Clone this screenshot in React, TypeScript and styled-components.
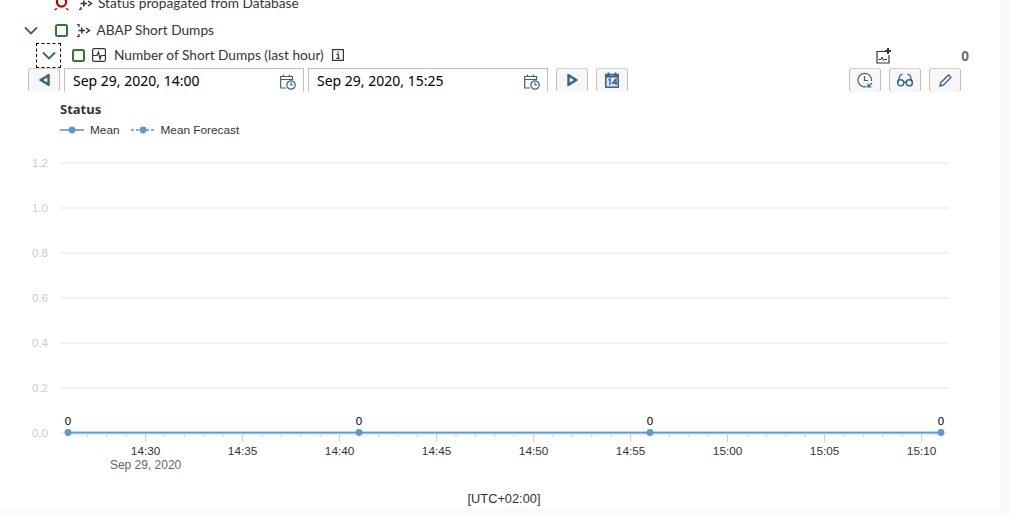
import React from "react";
import styled, { createGlobalStyle } from "styled-components";

const Global = createGlobalStyle`
  html, body { margin: 0; padding: 0; background: #fafafa; height: 516px; overflow: hidden; }
  #root { height: 516px; overflow: hidden; }
`;
const Page = styled.div`
  width: 1000px; height: 509px; background: #fff; overflow: hidden;
  font-family: "Noto Sans", "Liberation Sans", sans-serif; color: #32363a;
`;
const Tree = styled.div`margin-top: -9px; display: flex; flex-direction: column;`;
const Row = styled.div<{ $indent: number; $after: number }>`
  height: 24px; margin-bottom: ${p => p.$after}px; display: flex; align-items: center; padding-left: ${p => p.$indent}px; font-family: "Lato", "Noto Sans", sans-serif; font-size: 13.7px; white-space: nowrap;
`;
const Label = styled.span`margin-top: -2px;`;
const ExpandSlot = styled.div<{ $focus?: boolean }>`
  width: 23px; height: 23px; display: flex; align-items: center; justify-content: center; color: #346187;
  outline: ${p => (p.$focus ? "1px dashed #000" : "none")}; outline-offset: 0;
`;
const IconSlot = styled.span<{ $w: number; $ml?: number }>`
  width: ${p => p.$w}px; margin-left: ${p => p.$ml ?? 0}px; display: inline-flex; align-items: center; justify-content: flex-start; flex: none;
`;
const RowRight = styled.div`margin-left: auto; margin-top: 2px; display: flex; align-items: center; padding-right: 31px;`;
const Value = styled.span`font-family: "Noto Sans", sans-serif; font-weight: 700; color: #6a6d70; font-size: 13.5px; margin-left: 69px;`;
const Toolbar = styled.div`height: 24px; margin-top: 1px; padding-left: 28px; display: flex; align-items: flex-start; padding-right: 39px;`;
const ToolButton = styled.button<{ $ml?: number }>`
  width: 32px; height: 24px; margin: 0 0 0 ${p => p.$ml ?? 0}px; padding: 0; background: #f7f7f7; flex: none;
  border: 1px solid #bfbfbf; border-top-color: #d2d2d2; border-bottom-color: transparent; border-radius: 3px; display: flex; align-items: center; justify-content: center; color: #346187;
`;
const DateField = styled.div<{ $ml: number }>`
  width: 240px; height: 24px; margin-left: ${p => p.$ml}px; box-sizing: border-box; flex: none; border: 1px solid #bfbfbf; border-bottom: none;
  background: #fff; display: flex; align-items: center; justify-content: space-between; padding: 2px 7px 0 8px; font-size: 14px; color: #000; white-space: nowrap;
`;
const DateText = styled.span`margin-top: -2px;`;
const Spacer = styled.div`flex: 1;`;
const ChartTitle = styled.div`margin: 9px 0 0 60px; font-size: 13px; line-height: 17px; font-weight: 700; color: #32363a;`;
const Legend = styled.div`margin: 4px 0 0 60px; height: 16px; display: flex; align-items: center; font-family: "Liberation Sans", sans-serif; font-size: 11.8px; color: #333; gap: 11px;`;
const LegendItem = styled.div`display: flex; align-items: center; gap: 6px;`;
const Plot = styled.svg`display: block; font-family: "Liberation Sans", sans-serif;`;

const Stroke = { fill: "none", stroke: "currentColor", strokeWidth: 1.2 } as const;
const Chevron = () => (
  <svg width="14" height="9" viewBox="0 0 14 9"><path d="M1 1.5 7 7.5 13 1.5" fill="none" stroke="#346187" strokeWidth="1.9" /></svg>
);
const StatusOk = () => (
  <svg width="13" height="13" viewBox="0 0 13 13"><rect x="1" y="1" width="11" height="11" rx="1.5" fill="none" stroke="#2b7d2b" strokeWidth="2" /></svg>
);
const StatusBad = () => (
  <svg width="15" height="15" viewBox="0 0 15 15"><circle cx="7.5" cy="6" r="4.6" fill="none" stroke="#bb0000" strokeWidth="2.2" /><path d="M.5 14 3 12.2M14.5 14 12 12.2" stroke="#bb0000" strokeWidth="1.4" /></svg>
);
const Propagate = () => (
  <svg width="15" height="13" viewBox="0 0 15 13" style={{ color: "#32363a" }}>
    <path d="M1 .7H3V3M3 10V12.3H1" {...Stroke} />
    <path d="M2.5 6.5H9M5.8 3.5V9.5" fill="none" stroke="currentColor" strokeWidth="1.6" />
    <path d="M10 4 13.5 6.5 10 9" fill="none" stroke="currentColor" strokeWidth="1.5" />
  </svg>
);
const Metric = () => (
  <svg width="14" height="14" viewBox="0 0 14 14" style={{ color: "#32363a" }}>
    <rect x="0.6" y="0.6" width="12.8" height="12.8" rx="1.5" {...Stroke} />
    <path d="M1 7.5H5L6.5 4 8 11 9.2 7.5H13" {...Stroke} />
  </svg>
);
const Info = () => (
  <svg width="12" height="12" viewBox="0 0 12 12" style={{ color: "#32363a" }}>
    <rect x="0.6" y="0.6" width="10.8" height="10.8" {...Stroke} />
    <path d="M6 2.5V4M4.5 5.3H6.3V9M4.3 9.3H7.8" {...Stroke} />
  </svg>
);
const AddChart = () => (
  <svg width="16" height="16" viewBox="0 0 16 16" style={{ color: "#32363a" }}>
    <path d="M9 3.5H1V15H13V7" {...Stroke} />
    <path d="M2.5 11.5H5L6 9 7.5 12.5 8.5 11.5H11" fill="none" stroke="currentColor" strokeWidth="1" />
    <path d="M12 0V6M9 3H15" stroke="currentColor" strokeWidth="2" fill="none" />
  </svg>
);
const Back = () => (
  <svg width="11" height="12" viewBox="0 0 11 12"><path d="M9.5 1.2 1.8 6 9.5 10.8Z" fill="none" stroke="#346187" strokeWidth="2.4" /></svg>
);
const Forward = () => (
  <svg width="11" height="12" viewBox="0 0 11 12"><path d="M1.5 1.2 9.2 6 1.5 10.8Z" fill="none" stroke="#346187" strokeWidth="2.4" /></svg>
);
const CalClock = () => (
  <svg width="16" height="16" viewBox="0 0 16 16" style={{ color: "#346187" }}>
    <path d="M6 14H.7V2.5H12.5V6" {...Stroke} />
    <path d="M3.5 .5V3M9.5 .5V3M1 5.5H12" {...Stroke} />
    <circle cx="11" cy="11" r="4.2" {...Stroke} />
    <path d="M11 8.5V11H13" {...Stroke} />
  </svg>
);
const Cal14 = () => (
  <svg width="14" height="16" viewBox="0 0 14 16" style={{ color: "#346187" }}>
    <rect x="0.8" y="2.5" width="12.4" height="12.7" fill="#dfe8f0" stroke="currentColor" strokeWidth="1.5" />
    <path d="M3.5 .5V3.5M10.5 .5V3.5M1 4.5H13" stroke="currentColor" strokeWidth="1.8" fill="none" />
    <path d="M3.5 8 5 7V13M11 13V7L7.5 11H12" fill="none" stroke="currentColor" strokeWidth="1.3" />
  </svg>
);
const ClockBack = () => (
  <svg width="16" height="16" viewBox="0 0 16 16" style={{ color: "#346187" }}>
    <path d="M9.5 14.7A6.8 6.8 0 1 1 14.5 9" {...Stroke} />
    <path d="M7.5 4V8.5H11" {...Stroke} />
    <path d="M15 11 11 15M11 11.5V15H14.5" {...Stroke} />
  </svg>
);
const Glasses = () => (
  <svg width="16" height="14" viewBox="0 0 16 14" style={{ color: "#346187" }}>
    <circle cx="3.7" cy="9.8" r="3.1" fill="none" stroke="currentColor" strokeWidth="1.4" />
    <circle cx="12.3" cy="9.8" r="3.1" fill="none" stroke="currentColor" strokeWidth="1.4" />
    <path d="M6.8 9.5C7.5 8.8 8.5 8.8 9.2 9.5M.8 9 3 2.5 5.5 1M15.2 9 13 2.5 10.5 1" {...Stroke} />
  </svg>
);
const Pencil = () => (
  <svg width="13" height="13" viewBox="0 0 13 13" style={{ color: "#346187" }}>
    <path d="M1 12 1.8 8.7 9.5 1 12 3.5 4.3 11.2Z" fill="none" stroke="currentColor" strokeWidth="1.3" />
    <path d="M1 12 1.6 9.7 3.3 11.4Z" fill="currentColor" />
  </svg>
);
const LegendLine = ({ dash }: { dash?: boolean }) => (
  <svg width="24" height="8" viewBox="0 0 24 8">
    <path d="M0 4H24" stroke="#5899da" strokeWidth="1.6" strokeDasharray={dash ? "3 2" : undefined} />
    <circle cx="12" cy="4" r="3.4" fill="#5899da" />
  </svg>
);

const gridY = [
  { y: 163, t: "1.2" }, { y: 208, t: "1.0" }, { y: 253, t: "0.8" },
  { y: 298, t: "0.6" }, { y: 343, t: "0.4" }, { y: 388, t: "0.2" }, { y: 433, t: "0.0" },
];
const majors = ["14:30", "14:35", "14:40", "14:45", "14:50", "14:55", "15:00", "15:05", "15:10"];
const xOf = (i: number) => 145.6 + i * 97;
const minors = Array.from({ length: 45 }, (_, i) => 87.4 + i * 19.4).filter(x => x < 941);
const points = [68, 359, 650, 941];

export default function App() {
  return (
    <Page>
      <Global />
      <Tree>
        <Row $indent={54} $after={3}>
          <IconSlot $w={24}><StatusBad /></IconSlot>
          <IconSlot $w={20}><Propagate /></IconSlot>
          <Label>Status propagated from Database</Label>
        </Row>
        <Row $indent={19} $after={1}>
          <ExpandSlot><Chevron /></ExpandSlot>
          <IconSlot $w={21} $ml={13}><StatusOk /></IconSlot>
          <IconSlot $w={20.5}><Propagate /></IconSlot>
          <Label>ABAP Short Dumps</Label>
        </Row>
        <Row $indent={37} $after={0}>
          <ExpandSlot $focus><Chevron /></ExpandSlot>
          <IconSlot $w={21} $ml={12}><StatusOk /></IconSlot>
          <IconSlot $w={22} $ml={-1}><Metric /></IconSlot>
          <Label>Number of Short Dumps (last hour)</Label>
          <IconSlot $w={12} $ml={8}><Info /></IconSlot>
          <RowRight>
            <AddChart />
            <Value>0</Value>
          </RowRight>
        </Row>
      </Tree>
      <Toolbar>
        <ToolButton aria-label="Previous"><Back /></ToolButton>
        <DateField $ml={4}><DateText>Sep 29, 2020, 14:00</DateText><CalClock /></DateField>
        <DateField $ml={4}><DateText>Sep 29, 2020, 15:25</DateText><CalClock /></DateField>
        <ToolButton $ml={8} aria-label="Next"><Forward /></ToolButton>
        <ToolButton $ml={8} aria-label="Calendar"><Cal14 /></ToolButton>
        <Spacer />
        <ToolButton aria-label="Time"><ClockBack /></ToolButton>
        <ToolButton $ml={8} aria-label="View"><Glasses /></ToolButton>
        <ToolButton $ml={8} aria-label="Edit"><Pencil /></ToolButton>
      </Toolbar>
      <ChartTitle>Status</ChartTitle>
      <Legend>
        <LegendItem><LegendLine />Mean</LegendItem>
        <LegendItem><LegendLine dash />Mean Forecast</LegendItem>
      </Legend>
      <Plot width="1000" height="371" viewBox="0 138 1000 371">
        {gridY.map(g => (
          <g key={g.t}>
            <line x1="60" x2="949" y1={g.y} y2={g.y} stroke="#e5e5e5" />
            <text x="48" y={g.y + 3.5} textAnchor="end" fontSize="11.5" fill="#cccccc">{g.t}</text>
          </g>
        ))}
        {minors.map(x => (
          <line key={x} x1={x} x2={x} y1="433" y2="437" stroke="#cfcfcf" />
        ))}
        {majors.map((t, i) => (
          <g key={t}>
            <line x1={xOf(i)} x2={xOf(i)} y1="433" y2="442" stroke="#cfcfcf" />
            <text x={xOf(i)} y="455" textAnchor="middle" fontSize="11.8" fill="#333">{t}</text>
          </g>
        ))}
        <text x="145.6" y="469" textAnchor="middle" fontSize="12" fill="#666">Sep 29, 2020</text>
        <line x1="68" x2="941" y1="433" y2="433" stroke="#b9d4ef" strokeWidth="3" />
        <line x1="68" x2="941" y1="432.5" y2="432.5" stroke="#5899da" strokeWidth="1.6" />
        {points.map(x => (
          <g key={x}>
            <circle cx={x} cy="432.5" r="3.4" fill="#5899da" />
            <text x={x} y="425" textAnchor="middle" fontSize="11.5" fill="#000">0</text>
          </g>
        ))}
        <text x="504" y="503" textAnchor="middle" fontSize="12.8" fill="#333">[UTC+02:00]</text>
      </Plot>
    </Page>
  );
}
